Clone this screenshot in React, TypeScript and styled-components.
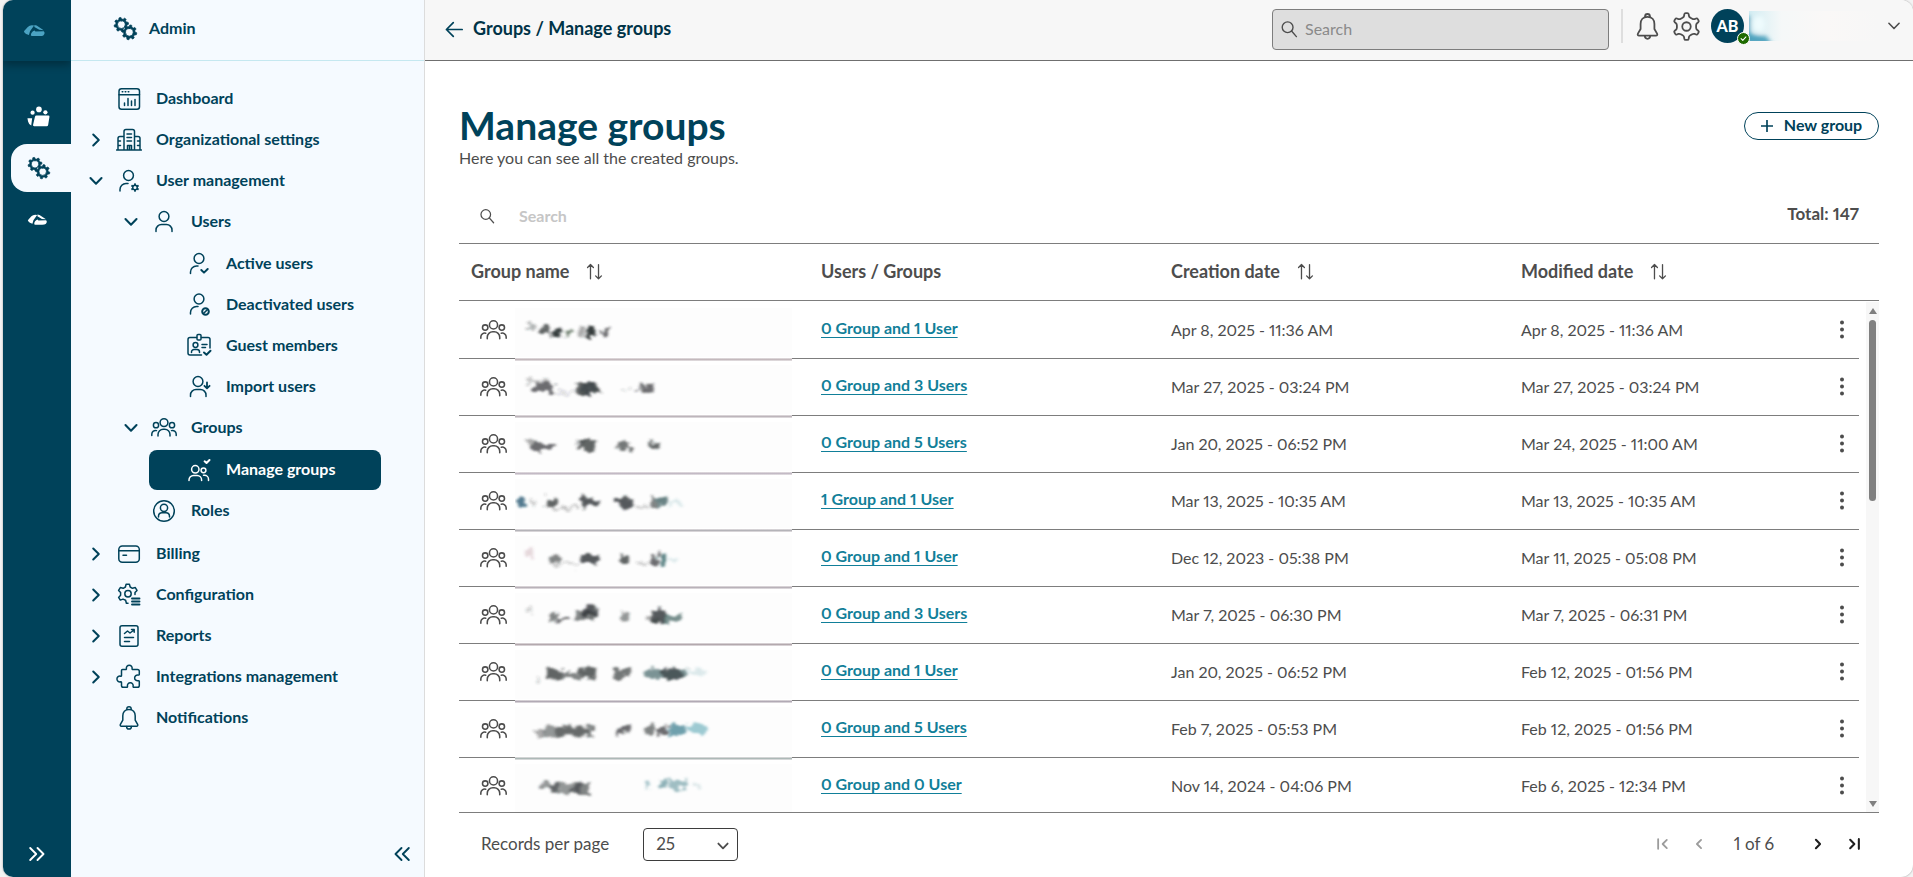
import React, { useState } from "react";
import styled, { createGlobalStyle, css } from "styled-components";

const navy = "#00425a";
const ink = "#4d4d4d";
const line = "#7d7d7d";

const GlobalStyle = createGlobalStyle`
  *, *::before, *::after { box-sizing: border-box; }
  body {
    margin: 0;
    background: #f3f3f3;
    color: ${ink};
    font-family: Lato, "Noto Sans", sans-serif;
    font-size: 16px;
    font-variant-numeric: proportional-nums;
    line-height: 20px;
  }
  button, input, select { font: inherit; color: inherit; }
  button { padding: 0; border: 0; background: none; cursor: pointer; }
  ul { margin: 0; padding: 0; list-style: none; }
  svg { display: block; flex: none; }
`;

/* ---------- icon geometry ---------- */

type Point = [number, number];

function roundedPolygon(points: Point[], k: number) {
  const mix = (a: Point, b: Point, t: number) =>
    `${(a[0] + (b[0] - a[0]) * t).toFixed(2)} ${(a[1] + (b[1] - a[1]) * t).toFixed(2)}`;
  return (
    points
      .map((p, i) => {
        const prev = points[(i + points.length - 1) % points.length];
        const next = points[(i + 1) % points.length];
        return `${i ? "L" : "M"}${mix(p, prev, k)}Q${p[0].toFixed(2)} ${p[1].toFixed(2)} ${mix(p, next, k)}`;
      })
      .join("") + "Z"
  );
}

function gear(cx: number, cy: number, outer: number, inner: number, teeth: number, top = 0.24, foot = 0.3, turn = 0) {
  const step = (Math.PI * 2) / teeth;
  const points: Point[] = [];
  for (let i = 0; i < teeth; i++) {
    const a = i * step - Math.PI / 2 + turn;
    const at = (r: number, d: number) => points.push([cx + r * Math.cos(a + d * step), cy + r * Math.sin(a + d * step)]);
    at(inner, -foot);
    at(outer, -top);
    at(outer, top);
    at(inner, foot);
  }
  return roundedPolygon(points, 0.3);
}

type IconName =
  | "gears" | "dashboard" | "building" | "userGear" | "user" | "userCheck" | "userOff" | "badge"
  | "userImport" | "groups" | "manageGroups" | "roles" | "card" | "config" | "report" | "puzzle"
  | "bell" | "settings" | "search" | "down" | "right" | "left" | "doubleRight" | "doubleLeft"
  | "first" | "last" | "back" | "sort" | "plus" | "kebab" | "logo" | "work" | "check";

const bellShape = (
  <>
    <path d="M10.8 4.6V4a2.2 2.2 0 0 1 4.4 0v.6" />
    <path d="M13 4.4c-4 0-6.2 2.800-6.200 6.400v4.400l-2.400 4.200c-.5.900 0 1.800 1 1.800h15.200c1 0 1.500-.9 1-1.800l-2.400-4.200v-4.400c0-3.600-2.200-6.400-6.200-6.400Z" />
    <path d="M10.600 21.400c0 1.600 1 2.600 2.400 2.600s2.400-1 2.400-2.600" />
  </>
);

const groupShape = (
  <>
    <circle cx="13" cy="7.600" r="3.900" />
    <circle cx="5" cy="10.200" r="2.600" />
    <circle cx="21" cy="10.200" r="2.600" />
    <path d="M7 21v-1.500a5.300 5.300 0 0 1 5.300-5.300h1.400a5.300 5.300 0 0 1 5.300 5.300V21" />
    <path d="M.8 20.500v-1.500a3.700 3.700 0 0 1 4.700-3.400M25.200 20.500v-1.500a3.700 3.700 0 0 0-4.700-3.400" />
  </>
);

const wing = "M1 9.400 5.200 4.600Q7 2.900 9.600 2.700L12 3.100 7.600 9.200 6.400 13.300 3.400 12.200Q1.300 11.200 1 9.400ZM12.300 2.500 14.800 3 22.400 8.200 17.600 7.700 12.300 4.700ZM8.500 13.900Q8.600 10 12.500 8.500L13.500 9.600 22.500 9.300Q24.500 11.300 22 13.800Q21 14.500 18 14.500L9.700 14.500Z";

const shapes: Record<IconName, React.ReactNode> = {
  gears: (
    <g strokeWidth="0.800" fill="currentColor" fillRule="evenodd">
      <path d={gear(8.700, 9, 7.600, 5.900, 8, 0.2, 0.28, -0.2) + "M8.700 5a4 4 0 1 0 0 8a4 4 0 1 0 0-8Z"} />
      <circle cx="17" cy="17" r="7" fill="var(--gap)" stroke="none" />
      <path d={gear(17, 17, 7.800, 6, 8, 0.2, 0.28, 0.2) + "M17 13a4 4 0 1 0 0 8a4 4 0 1 0 0-8Z"} />
    </g>
  ),
  dashboard: (
    <>
      <rect x="3" y="2.700" width="20.500" height="20.500" rx="2.500" />
      <path d="M3 8.700h20.500M6.200 5.700h.6M9.200 5.700h.6M12.200 5.700h.6M8.500 17v2.500M12 12.500v7M15.500 15v4.500M19 13.500v6" />
    </>
  ),
  building: (
    <path d="M.5 23h25M8 23V4.500a2 2 0 0 1 2-2h6.500a2 2 0 0 1 2 2V23M8 9.500H4a2 2 0 0 0-2 2V23M18.500 9.500H22a2 2 0 0 1 2 2V23M11 7h4.500M11 10.500h4.500M11 14h4.500M11.500 23v-4.500h4V23M13.500 18.500V23M2 14h2.500M2 18.500h2.500M21.500 14H24M21.500 18.500H24" />
  ),
  userGear: (
    <>
      <circle cx="12.500" cy="7.500" r="4.900" />
      <path d="M4 23v-1.500a6 6 0 0 1 6-6h2" />
      <path d={gear(19, 19.500, 4.300, 3, 6, 0.22, 0.28) + "M19 18a1.500 1.500 0 1 0 0 3a1.500 1.500 0 1 0 0-3Z"} fill="currentColor" fillRule="evenodd" stroke="none" />
    </>
  ),
  user: (
    <>
      <circle cx="13" cy="7.500" r="4.900" />
      <path d="M5 22.500v-1.500a5.500 5.500 0 0 1 5.500-5.500h5a5.500 5.500 0 0 1 5.500 5.500v1.500" />
    </>
  ),
  userCheck: (
    <>
      <circle cx="13" cy="7.500" r="4.900" />
      <path d="M4.500 22.500v-1.500a6 6 0 0 1 6-6h1.500" />
      <path d="m15.300 19 2.700 2.600 3.700-3.600" strokeWidth="2" />
    </>
  ),
  userOff: (
    <>
      <circle cx="13" cy="7" r="4.900" />
      <path d="M4.500 22v-1.500a6 6 0 0 1 6-6h1.500" />
      <circle cx="19.500" cy="19.500" r="3.300" strokeWidth="2" />
      <path d="m17.500 21.500 4-4" strokeWidth="1.600" />
    </>
  ),
  badge: (
    <>
      <path d="M10.500 4.500H4a2 2 0 0 0-2 2V20a2 2 0 0 0 2 2h11.500M15.500 4.500H22a2 2 0 0 1 2 2V15" />
      <rect x="11" y="1.500" width="4" height="5.500" rx="1" />
      <circle cx="9.500" cy="12" r="2.400" />
      <path d="M5.500 19.500v-.5a2.500 2.500 0 0 1 2.500-2.500h3a2.500 2.500 0 0 1 2.500 2.500v.5M16 11.500h5M16 14.500h3.500" />
      <path d="m18 19.500 2.500 2.300 4-4" strokeWidth="2" />
    </>
  ),
  userImport: (
    <>
      <circle cx="12" cy="7.500" r="4.900" />
      <path d="M4.500 22.500v-1.500a5.500 5.500 0 0 1 5.500-5.500h4.500a5.500 5.500 0 0 1 5.500 5.500v1.500" />
      <path d="M21 8.500v5.500m-2.600-2.200 2.600 2.600 2.600-2.600" strokeWidth="1.800" />
    </>
  ),
  groups: groupShape,
  manageGroups: (
    <>
      <circle cx="9.300" cy="12.300" r="3.700" />
      <circle cx="17.500" cy="13.300" r="2.400" />
      <path d="M3 23.500V23a4.500 4.500 0 0 1 4.500-4.500h3.600A4.500 4.500 0 0 1 15.600 23v.5M17.500 18.300h1a4 4 0 0 1 4 4v1.200" />
      <path d="m18.600 4.300 1.900 1.700 3-3" strokeWidth="2" />
    </>
  ),
  roles: (
    <>
      <circle cx="13" cy="13" r="10.300" />
      <circle cx="13" cy="9.800" r="3.600" />
      <path d="M7.500 19v-1a3.500 3.500 0 0 1 3.500-3.300h4a3.500 3.500 0 0 1 3.500 3.300v1" />
    </>
  ),
  card: (
    <>
      <rect x="2.800" y="5" width="20.500" height="16.300" rx="3.500" />
      <path d="M2.800 9.800h20.500M7 14.200h3.500" />
    </>
  ),
  config: (
    <>
      <path d="M12 21.200h-1.600l-.8-3-2.600-1.100-2.700 1-1.700-2.700 2-2.200v-2.600l-2-2.200 1.700-2.800 2.900.7 2.200-1.300.7-2.700h3.300l.8 2.700 2.200 1.300 2.900-.7 1.700 2.800-2 2.200v2" />
      <circle cx="12" cy="11.800" r="3.200" />
      <path d="M16 16.500h7.500M16 19.500h7.500M16 22.500h7.500" strokeWidth="1.900" />
    </>
  ),
  report: (
    <>
      <rect x="4" y="2.700" width="18" height="20.500" rx="2" />
      <path d="m8.500 10.500 3-2.500 2.500 2 4-3M15.500 6.500h2.700v2.700M8.500 14.500h9M8.500 18.500h5" />
    </>
  ),
  puzzle: (
    <path d="M6.500 5.500h3.200c.5 0 .8-.4.700-.9a2.900 2.900 0 1 1 5.700 0c-.1.500.2.900.7.900h4.700a1.800 1.800 0 0 1 1.800 1.800v3c0 .6-.5.900-1 .800a2.900 2.900 0 1 0 0 5.600c.5-.1 1 .2 1 .8v4a1.800 1.800 0 0 1-1.800 1.800h-3.700c-.5 0-.8-.4-.7-.9a2.900 2.900 0 1 0-5.600 0c.1.500-.2.900-.7.900H7.300a1.800 1.800 0 0 1-1.800-1.800v-3c0-.5-.4-.8-.9-.7a2.900 2.900 0 1 1 0-5.600c.5.100.9-.2.900-.7V6.500a1 1 0 0 1 1-1Z" />
  ),
  bell: bellShape,
  settings: (
    <>
      <path d={gear(13, 13, 12.200, 8.900, 6, 0.14, 0.25)} />
      <circle cx="13" cy="13" r="3.800" />
    </>
  ),
  search: (
    <>
      <circle cx="11" cy="10.500" r="7.800" />
      <path d="m16.700 16 7 8" />
    </>
  ),
  down: <path d="m7 9.800 6 6.200 6-6.200" />,
  right: <path d="m10 7 6 6-6 6" />,
  left: <path d="m16 7-6 6 6 6" />,
  doubleRight: <path d="m6.200 7 6 6-6 6M13.500 7l6 6-6 6" />,
  doubleLeft: <path d="m12.500 7-6 6 6 6M19.800 7l-6 6 6 6" />,
  first: <path d="M6 6v14M18.500 7l-6 6 6 6" />,
  last: <path d="M20 6v14M7.500 7l6 6-6 6" />,
  back: <path d="M22.500 13H3m8.500-8.500L3 13l8.500 8.500" />,
  sort: <path d="M7.500 23V3.500M3.500 7.500l4-4 4 4M18.500 3.500V23M14.500 19l4 4 4-4" />,
  plus: <path d="M13 1v24M1 13h24" />,
  kebab: (
    <g fill="currentColor" stroke="none">
      <circle cx="13" cy="5.500" r="2" />
      <circle cx="13" cy="12.500" r="2" />
      <circle cx="13" cy="19.500" r="2" />
    </g>
  ),
  logo: (
    <g transform="translate(0 4)" fill="currentColor" stroke="none">
      <path d={wing} />
    </g>
  ),
  work: (
    <g fill="currentColor" stroke="none">
      <circle cx="13.500" cy="5" r="3.200" />
      <circle cx="6.300" cy="8.700" r="2.400" />
      <circle cx="20.800" cy="8.300" r="2.400" />
      <path d="M9 13.200q.3-1.400 1.700-1.400H24q1.600 0 1.400 1.500l-1.500 9.300q-.2 1.400-1.700 1.400H8q-1.400 0-1.200-1.300ZM.5 15h5.300l-1 8.300q-2.700-1-3.600-4.600Z" />
    </g>
  ),
  check: <path d="m6 13.500 5 5 9-10" />,
};

function Icon({ name, size = 26, weight = 1.5 }: { name: IconName; size?: number; weight?: number }) {
  return (
    <svg
      width={size}
      height={size}
      viewBox="0 0 26 26"
      fill="none"
      stroke="currentColor"
      strokeWidth={weight}
      strokeLinecap="round"
      strokeLinejoin="round"
      aria-hidden="true"
    >
      {shapes[name]}
    </svg>
  );
}

/* ---------- shell ---------- */

const Shell = styled.div`
  display: flex;
  height: 100vh;
  margin-left: 3px;
  border-radius: 10px 12px 12px 10px;
  overflow: hidden;
  background: #fff;
  box-shadow: 0 0 2px rgba(0, 0, 0, 0.4);
`;

const Rail = styled.nav`
  display: flex;
  flex-direction: column;
  flex: none;
  width: 68px;
  background: ${navy};
  color: #fff;
`;

const RailLogo = styled.a`
  display: flex;
  justify-content: center;
  align-items: center;
  height: 61px;
  padding-right: 4px;
  color: #4ba3c3;
  box-shadow: 0 4px 8px rgba(0, 0, 0, 0.3);
`;

const RailItems = styled.div`
  display: flex;
  flex-direction: column;
  align-items: flex-end;
  gap: 4px;
  padding-top: 31px;
`;

const RailItem = styled.button<{ $active?: boolean }>`
  display: flex;
  align-items: center;
  width: 60px;
  height: 48px;
  padding-left: 16px;
  border-radius: 16px 0 0 16px;
  --gap: #f5faff;
  ${(p) => p.$active && css`
    background: #f5faff;
    color: ${navy};
  `}
`;

const RailToggle = styled.button`
  display: flex;
  justify-content: center;
  margin-top: auto;
  padding: 0 0 10px;
`;

const Side = styled.aside`
  display: flex;
  flex-direction: column;
  flex: none;
  width: 354px;
  background: #f5faff;
  border-right: 1px solid #dcdcdc;
  color: ${navy};
`;

const SideHead = styled.div`
  display: flex;
  align-items: center;
  gap: 11px;
  height: 61px;
  padding: 0 0 4px 42px;
  border-bottom: 1px solid #c5e8f0;
  font-weight: 700;
  --gap: #f5faff;
`;

const Menu = styled.ul`
  padding-top: 17px;
`;

const SubMenu = styled.ul<{ $deep?: boolean }>`
  padding-bottom: ${(p) => (p.$deep ? 0 : 1)}px;
`;

const rowHeights = [41, 42, 41];

const MenuRow = styled.a<{ $level: number; $active?: boolean }>`
  display: flex;
  align-items: center;
  gap: 14px;
  height: ${(p) => rowHeights[p.$level]}px;
  padding-left: ${(p) => 13 + p.$level * 35}px;
  color: inherit;
  font-weight: 700;
  text-decoration: none;
  ${(p) => p.$active && css`
    height: 40px;
    margin: 1px 43px 0 78px;
    padding-left: 5px;
    border-radius: 8px;
    background: ${navy};
    color: #fff;
  `}
`;

const RowGlyphs = styled.span`
  display: grid;
  grid-template-columns: 24px 26px;
  gap: 8px;
  align-items: center;
`;

const RowLabel = styled.span`
  padding-bottom: 2px;
`;

const SideToggle = styled.button`
  align-self: flex-end;
  margin-top: auto;
  padding: 0 9px 10px 0;
`;

type Item = { label: string; icon: IconName; open?: boolean; closed?: boolean; active?: boolean; children?: Item[] };

const menu: Item[] = [
  { label: "Dashboard", icon: "dashboard" },
  { label: "Organizational settings", icon: "building", closed: true },
  {
    label: "User management",
    icon: "userGear",
    open: true,
    children: [
      {
        label: "Users",
        icon: "user",
        open: true,
        children: [
          { label: "Active users", icon: "userCheck" },
          { label: "Deactivated users", icon: "userOff" },
          { label: "Guest members", icon: "badge" },
          { label: "Import users", icon: "userImport" },
        ],
      },
      { label: "Groups", icon: "groups", open: true, children: [{ label: "Manage groups", icon: "manageGroups", active: true }] },
      { label: "Roles", icon: "roles" },
    ],
  },
  { label: "Billing", icon: "card", closed: true },
  { label: "Configuration", icon: "config", closed: true },
  { label: "Reports", icon: "report", closed: true },
  { label: "Integrations management", icon: "puzzle", closed: true },
  { label: "Notifications", icon: "bell" },
];

function MenuItems({ items, level }: { items: Item[]; level: number }) {
  return (
    <>
      {items.map((item) => (
        <li key={item.label}>
          <MenuRow href="#" $level={level} $active={item.active}>
            <RowGlyphs>
              <span>{(item.open || item.closed) && <Icon name={item.open ? "down" : "right"} size={24} weight={2.2} />}</span>
              <Icon name={item.icon} />
            </RowGlyphs>
            <RowLabel>{item.label}</RowLabel>
          </MenuRow>
          {item.children && (
            <SubMenu $deep={level > 0}>
              <MenuItems items={item.children} level={level + 1} />
            </SubMenu>
          )}
        </li>
      ))}
    </>
  );
}

/* ---------- top bar ---------- */

const Main = styled.main`
  display: flex;
  flex-direction: column;
  flex: 1;
  min-width: 0;
`;

const TopBar = styled.header`
  display: flex;
  align-items: center;
  flex: none;
  height: 61px;
  padding: 0 8px 2px 19px;
  background: #f7f7f7;
  border-bottom: 1px solid #6f6f6f;
`;

const Crumbs = styled.a`
  display: flex;
  align-items: center;
  gap: 8px;
  margin-right: auto;
  color: ${navy};
  text-decoration: none;
  b { padding-bottom: 2px; font-size: 18px; color: #003347; }
`;

const TopSearch = styled.label`
  display: flex;
  align-items: center;
  gap: 7px;
  width: 337px;
  height: 41px;
  padding-left: 7px;
  border: 1px solid ${line};
  border-radius: 4px;
  background: #dedede;
  input {
    flex: 1;
    min-width: 0;
    padding: 0;
    border: 0;
    outline: 0;
    background: none;
  }
  input::placeholder { color: #8a8a8a; opacity: 1; }
`;

const TopActions = styled.div`
  display: flex;
  align-items: center;
  gap: 10px;
  height: 34px;
  margin-left: 12px;
  padding-left: 10px;
  border-left: 2px solid #dedede;
  margin-bottom: 6px;
`;

const Account = styled.button`
  display: flex;
  align-items: center;
  gap: 5px;
`;

const Avatar = styled.span`
  position: relative;
  display: grid;
  place-items: center;
  width: 33px;
  height: 34px;
  border-radius: 50%;
  background: ${navy};
  color: #fff;
  font-weight: 900;
`;

const Online = styled.span`
  position: absolute;
  right: -6px;
  bottom: -2px;
  display: grid;
  place-items: center;
  width: 13px;
  height: 13px;
  border: 1px solid #fff;
  border-radius: 50%;
  background: #1f6b00;
`;

/* ---------- page ---------- */

const Page = styled.section`
  display: flex;
  flex-direction: column;
  flex: 1;
  min-height: 0;
  padding: 41px 34px 0;
`;

const PageHead = styled.div`
  display: flex;
  justify-content: space-between;
  align-items: flex-start;
`;

const Title = styled.h1`
  margin: 0;
  color: ${navy};
  font-size: 39px;
  font-weight: 700;
  line-height: 46px;
`;

const Intro = styled.p`
  margin: 0;
`;

const NewButton = styled.button`
  display: flex;
  justify-content: center;
  align-items: center;
  gap: 11px;
  width: 135px;
  height: 28px;
  margin-top: 10px;
  border: 1px solid ${navy};
  border-radius: 14px;
  color: ${navy};
  font-weight: 700;
`;

const FilterBar = styled.div`
  display: flex;
  justify-content: space-between;
  align-items: center;
  padding: 32px 20px 12px;
  label { display: flex; align-items: center; gap: 24px; height: 31px; }
  input { width: 300px; padding: 0; border: 0; outline: 0; background: none; font-weight: 700; }
  input::placeholder { color: #c6c6c6; opacity: 1; }
  strong { font-size: 17px; margin-bottom: 4px; }
`;

const TableArea = styled.div`
  position: relative;
  display: flex;
  flex: 1;
  min-height: 0;
  border-top: 1px solid ${line};
  border-bottom: 1px solid ${line};
`;

const Table = styled.table`
  display: flex;
  flex-direction: column;
  flex: 1;
  min-height: 0;
  thead { display: block; flex: none; border-bottom: 1px solid ${line}; }
  tbody { display: block; flex: 1; min-height: 0; margin-right: 20px; padding-top: 1px; overflow-y: auto; scrollbar-width: none; }
  tr { display: grid; grid-template-columns: 5fr 5fr 5fr 4fr 1fr; align-items: center; }
  thead tr { height: 56px; margin-right: 20px; padding-bottom: 2px; }
  tbody tr { height: 57px; border-bottom: 1px solid ${line}; }
  th, td { padding: 0 0 0 12px; text-align: left; }
`;

const HeadLabel = styled.span`
  display: flex;
  align-items: center;
  gap: 16px;
  font-size: 18px;
`;

const NameCell = styled.td`
  position: relative;
  svg { margin-left: 9px; }
`;

const MembersLink = styled.a`
  display: block;
  margin-bottom: 4px;
  color: #117f99;
  font-weight: 700;
  text-underline-offset: 3px;
`;

const MenuCell = styled.td`
  display: flex;
  justify-content: flex-end;
  && { padding-right: 4px; }
`;

const Redacted = styled.span`
  position: absolute;
  top: -9px;
  left: 56px;
  svg { margin: 0; }
`;

const ScrollTrack = styled.div`
  position: absolute;
  top: 58px;
  right: 0;
  bottom: 0;
  display: flex;
  flex-direction: column;
  align-items: center;
  width: 13px;
  padding: 6px 0 5px;
  background: #f7f7f7;
  color: #808080;
`;

const ScrollLane = styled.div`
  flex: 1;
  width: 7px;
  margin: 6px 0;
`;

const ScrollThumb = styled.div`
  height: 38%;
  border-radius: 4px;
  background: #808080;
`;

const Footer = styled.footer`
  display: flex;
  align-items: center;
  flex: none;
  height: 64px;
  padding: 0 16px 2px 22px;
`;

const PageSize = styled.label`
  display: flex;
  align-items: center;
  gap: 34px;
  margin-right: auto;
  font-size: 17px;
`;

const SelectBox = styled.span`
  position: relative;
  display: block;
  select {
    appearance: none;
    width: 95px;
    height: 33px;
    padding: 0 12px;
    border: 1px solid #3d3d3d;
    border-radius: 4px;
    background: #fff;
  }
  svg { position: absolute; top: 8px; right: 5px; pointer-events: none; }
`;

const Pager = styled.div`
  display: flex;
  align-items: center;
  gap: 18px;
  color: #1f1f1f;
  button:disabled { color: #9c9c9c; }
  span { padding: 0 17px 0 8px; color: ${ink}; font-size: 17px; }
`;

/* x, width, height, opacity, tint, y offset */
type Blob = [number, number, number, number, string?, number?];
type Row = { link: string; created: string; modified: string; blobs: Blob[]; rule: string };

const rows: Row[] = [
  { link: "0 Group and 1 User", created: "Apr 8, 2025 - 11:36 AM", modified: "Apr 8, 2025 - 11:36 AM", rule: "#c4b9bd",
    blobs: [[12, 8, 4, 0.35, , -5], [24, 10, 8, 0.75], [38, 9, 6, 0.95, , 1], [50, 6, 6, 0.7, "#354b32"], [63, 8, 7, 0.4], [72, 9, 8, 0.95, , 1], [85, 8, 5, 0.7, , 1]] },
  { link: "0 Group and 3 Users", created: "Mar 27, 2025 - 03:24 PM", modified: "Mar 27, 2025 - 03:24 PM", rule: "#bdb5bb",
    blobs: [[12, 22, 4, 0.25, , -7], [18, 21, 10, 0.7], [40, 20, 3, 0.15, , 4], [60, 24, 10, 0.75], [66, 16, 8, 0.5], [106, 8, 3, 0.2, , 2], [122, 15, 7, 0.7, , 1]] },
  { link: "0 Group and 5 Users", created: "Jan 20, 2025 - 06:52 PM", modified: "Mar 24, 2025 - 11:00 AM", rule: "#c3bac5",
    blobs: [[12, 10, 5, 0.4, , -3], [17, 21, 8, 0.7, , 1], [58, 12, 5, 0.35, , -3], [63, 19, 10, 0.75], [102, 12, 7, 0.65, , 1], [132, 13, 7, 0.75]] },
  { link: "1 Group and 1 User", created: "Mar 13, 2025 - 10:35 AM", modified: "Mar 13, 2025 - 10:35 AM", rule: "#b5b4b9",
    blobs: [[3, 7, 9, 0.75, "#17506b", 1], [16, 8, 4, 0.25], [31, 12, 9, 0.75], [40, 24, 3, 0.3, , 6], [67, 16, 9, 0.8], [101, 15, 9, 0.8], [118, 14, 3, 0.25, , 5], [135, 8, 10, 0.6], [143, 9, 9, 0.75, "#355a5c"], [156, 10, 6, 0.18, "#40909a"]] },
  { link: "0 Group and 1 User", created: "Dec 12, 2023 - 05:38 PM", modified: "Mar 11, 2025 - 05:08 PM", rule: "#b9b2b9",
    blobs: [[10, 8, 8, 0.2, "#8c4454", -6], [33, 12, 7, 0.6], [40, 25, 3, 0.25, , 6], [66, 18, 8, 0.8], [103, 11, 8, 0.75], [118, 15, 3, 0.25, , 5], [136, 7, 10, 0.7], [144, 8, 10, 0.75, "#24585c"], [156, 6, 6, 0.18, "#40909a"]] },
  { link: "0 Group and 3 Users", created: "Mar 7, 2025 - 06:30 PM", modified: "Mar 7, 2025 - 06:31 PM", rule: "#b4a9ae",
    blobs: [[12, 4, 6, 0.2, , -6], [34, 8, 10, 0.6, , 1], [42, 12, 5, 0.7, , 4], [60, 20, 8, 0.6], [68, 14, 9, 0.8, , -4], [105, 10, 9, 0.5], [130, 12, 5, 0.4, , 3], [137, 14, 11, 0.8], [150, 17, 8, 0.65, "#315552", 2]] },
  { link: "0 Group and 1 User", created: "Jan 20, 2025 - 06:52 PM", modified: "Feb 12, 2025 - 01:56 PM", rule: "#b2aab5",
    blobs: [[20, 5, 5, 0.2, , 6], [34, 12, 9, 0.75], [46, 18, 6, 0.6, , 2], [64, 16, 9, 0.75], [98, 18, 8, 0.65], [131, 42, 9, 0.65, "#355a5c"], [144, 22, 10, 0.6], [174, 14, 5, 0.18, "#40909a"]] },
  { link: "0 Group and 5 Users", created: "Feb 7, 2025 - 05:53 PM", modified: "Feb 12, 2025 - 01:56 PM", rule: "#adb9b7",
    blobs: [[19, 10, 6, 0.4, , 3], [28, 50, 9, 0.5, , 1], [40, 36, 7, 0.45, , 1], [103, 13, 7, 0.7], [132, 7, 10, 0.6], [142, 11, 10, 0.7], [154, 18, 10, 0.7, "#32798a", -1], [174, 16, 10, 0.5, "#3d98a8", -1]] },
  { link: "0 Group and 0 User", created: "Nov 14, 2024 - 04:06 PM", modified: "Feb 6, 2025 - 12:34 PM", rule: "#bba5ad",
    blobs: [[24, 20, 6, 0.5, , -1], [36, 30, 9, 0.5], [56, 19, 8, 0.6, , 2], [132, 3, 10, 0.5, "#4d8b98", -3], [144, 8, 9, 0.6, "#42808a", -4], [154, 20, 9, 0.5, "#42808a", -3], [180, 7, 6, 0.2, "#42808a"]] },
];

function RedactedName({ row, id }: { row: Row; id: string }) {
  return (
    <Redacted aria-label="Hidden group name" role="img">
      <svg width="277" height="49" viewBox="0 0 277 49">
        <defs>
          <filter id={id} x="-20%" y="-100%" width="140%" height="300%">
            <feTurbulence type="fractalNoise" baseFrequency="0.140 0.120" numOctaves="2" seed={id.length + row.blobs.length} result="noise" />
            <feDisplacementMap in="SourceGraphic" in2="noise" scale="14" xChannelSelector="R" yChannelSelector="G" />
            <feGaussianBlur stdDeviation="1.500 1.200" />
          </filter>
        </defs>
        <rect width="277" height="49" fill="#fdfdfd" />
        <g filter={`url(#${id})`}>
          {row.blobs.map(([x, w, h, opacity, tint = "#2c3133", dy = 0], i) => (
            <rect key={i} x={x} y={23 - h / 2 + dy} width={w} height={h} rx="2" fill={tint} opacity={opacity} />
          ))}
        </g>
      </svg>
    </Redacted>
  );
}

const RuleSmudge = styled.i<{ $tint: string }>`
  position: absolute;
  bottom: -17px;
  left: 56px;
  width: 277px;
  height: 3px;
  background: linear-gradient(#e6e2e4, ${(p) => p.$tint} 50%, #e9e6e8);
`;

function SortHead({ children }: { children: string }) {
  return (
    <th scope="col">
      <HeadLabel>
        {children}
        <button aria-label={`Sort by ${children}`}>
          <Icon name="sort" size={19} weight={1.8} />
        </button>
      </HeadLabel>
    </th>
  );
}

export default function App() {
  const [scroll, setScroll] = useState(0);
  return (
    <>
      <GlobalStyle />
      <Shell>
        <Rail aria-label="Applications">
          <RailLogo href="#" aria-label="Home">
            <Icon name="logo" size={24} />
          </RailLogo>
          <RailItems>
            <RailItem aria-label="Workspace"><Icon name="work" size={23} /></RailItem>
            <RailItem $active aria-label="Admin"><Icon name="gears" size={24} /></RailItem>
            <RailItem aria-label="Product"><Icon name="logo" size={22} /></RailItem>
          </RailItems>
          <RailToggle aria-label="Expand"><Icon name="doubleRight" weight={1.9} /></RailToggle>
        </Rail>

        <Side>
          <SideHead>
            <Icon name="gears" size={25} />
            Admin
          </SideHead>
          <Menu>
            <MenuItems items={menu} level={0} />
          </Menu>
          <SideToggle aria-label="Collapse menu"><Icon name="doubleLeft" weight={1.9} /></SideToggle>
        </Side>

        <Main>
          <TopBar>
            <Crumbs href="#">
              <Icon name="back" size={21} weight={2.1} />
              <b>Groups / Manage groups</b>
            </Crumbs>
            <TopSearch>
              <Icon name="search" size={18} weight={2} />
              <input type="search" placeholder="Search" aria-label="Search" />
            </TopSearch>
            <TopActions>
              <button aria-label="Notifications"><Icon name="bell" size={29} weight={1.6} /></button>
              <button aria-label="Settings"><Icon name="settings" size={29} weight={1.6} /></button>
              <Account aria-label="Account">
                <Avatar>
                  AB
                  <Online><Icon name="check" size={9} weight={3} /></Online>
                </Avatar>
                <svg width="129" height="30" viewBox="0 0 129 30">
                  <defs>
                    <linearGradient id="fade">
                      <stop offset="0" stopColor="#d3edf3" />
                      <stop offset="0.25" stopColor="#f5f8f8" />
                      <stop offset="0.6" stopColor="#faf8f7" />
                      <stop offset="1" stopColor="#f7f7f7" />
                    </linearGradient>
                    <filter id="soft" x="-20%" y="-20%" width="140%" height="140%">
                      <feGaussianBlur stdDeviation="2" />
                    </filter>
                  </defs>
                  <rect width="129" height="30" fill="url(#fade)" />
                  <g filter="url(#soft)">
                    <path d="M-3 5h4v17q4 3 16 3l6 8H-3Z" fill="#2b8fb0" opacity="0.800" />
                    <ellipse cx="10" cy="13" rx="6" ry="8" fill="#eefbfd" />
                  </g>
                </svg>
                <Icon name="down" size={22} weight={1.9} />
              </Account>
            </TopActions>
          </TopBar>

          <Page>
            <PageHead>
              <div>
                <Title>Manage groups</Title>
                <Intro>Here you can see all the created groups.</Intro>
              </div>
              <NewButton>
                <Icon name="plus" size={12} weight={3.600} />
                <RowLabel>New group</RowLabel>
              </NewButton>
            </PageHead>

            <FilterBar>
              <label>
                <Icon name="search" size={16} weight={2} />
                <input type="search" placeholder="Search" aria-label="Search groups" />
              </label>
              <strong>Total: 147</strong>
            </FilterBar>

            <TableArea>
              <Table>
                <thead>
                  <tr>
                    <SortHead>Group name</SortHead>
                    <th scope="col"><HeadLabel>Users / Groups</HeadLabel></th>
                    <SortHead>Creation date</SortHead>
                    <SortHead>Modified date</SortHead>
                  </tr>
                </thead>
                <tbody
                  onScroll={(e) => {
                    const el = e.currentTarget;
                    setScroll(el.scrollTop / Math.max(1, el.scrollHeight - el.clientHeight));
                  }}
                >
                  {rows.map((row, i) => (
                    <tr key={i}>
                      <NameCell>
                        <Icon name="groups" size={27} />
                        <RedactedName row={row} id={`smudge-${i}`} />
                        {i < rows.length - 1 && <RuleSmudge $tint={row.rule} />}
                      </NameCell>
                      <td><MembersLink href="#">{row.link}</MembersLink></td>
                      <td>{row.created}</td>
                      <td>{row.modified}</td>
                      <MenuCell>
                        <button aria-label="Row actions"><Icon name="kebab" /></button>
                      </MenuCell>
                    </tr>
                  ))}
                </tbody>
              </Table>
              <ScrollTrack aria-hidden="true">
                <svg width="8" height="6"><path d="M0 6 4 0l4 6Z" fill="currentColor" /></svg>
                <ScrollLane>
                  <ScrollThumb style={{ marginTop: scroll * 295 }} />
                </ScrollLane>
                <svg width="8" height="6"><path d="M0 0h8L4 6Z" fill="currentColor" /></svg>
              </ScrollTrack>
            </TableArea>

            <Footer>
              <PageSize>
                Records per page
                <SelectBox>
                  <select defaultValue="25">
                    <option>10</option>
                    <option>25</option>
                    <option>50</option>
                  </select>
                  <Icon name="down" size={20} weight={2.400} />
                </SelectBox>
              </PageSize>
              <Pager>
                <button disabled aria-label="First page"><Icon name="first" size={18} weight={2.600} /></button>
                <button disabled aria-label="Previous page"><Icon name="left" size={18} weight={2.600} /></button>
                <span>1 of 6</span>
                <button aria-label="Next page"><Icon name="right" size={18} weight={3} /></button>
                <button aria-label="Last page"><Icon name="last" size={18} weight={3} /></button>
              </Pager>
            </Footer>
          </Page>
        </Main>
      </Shell>
    </>
  );
}
